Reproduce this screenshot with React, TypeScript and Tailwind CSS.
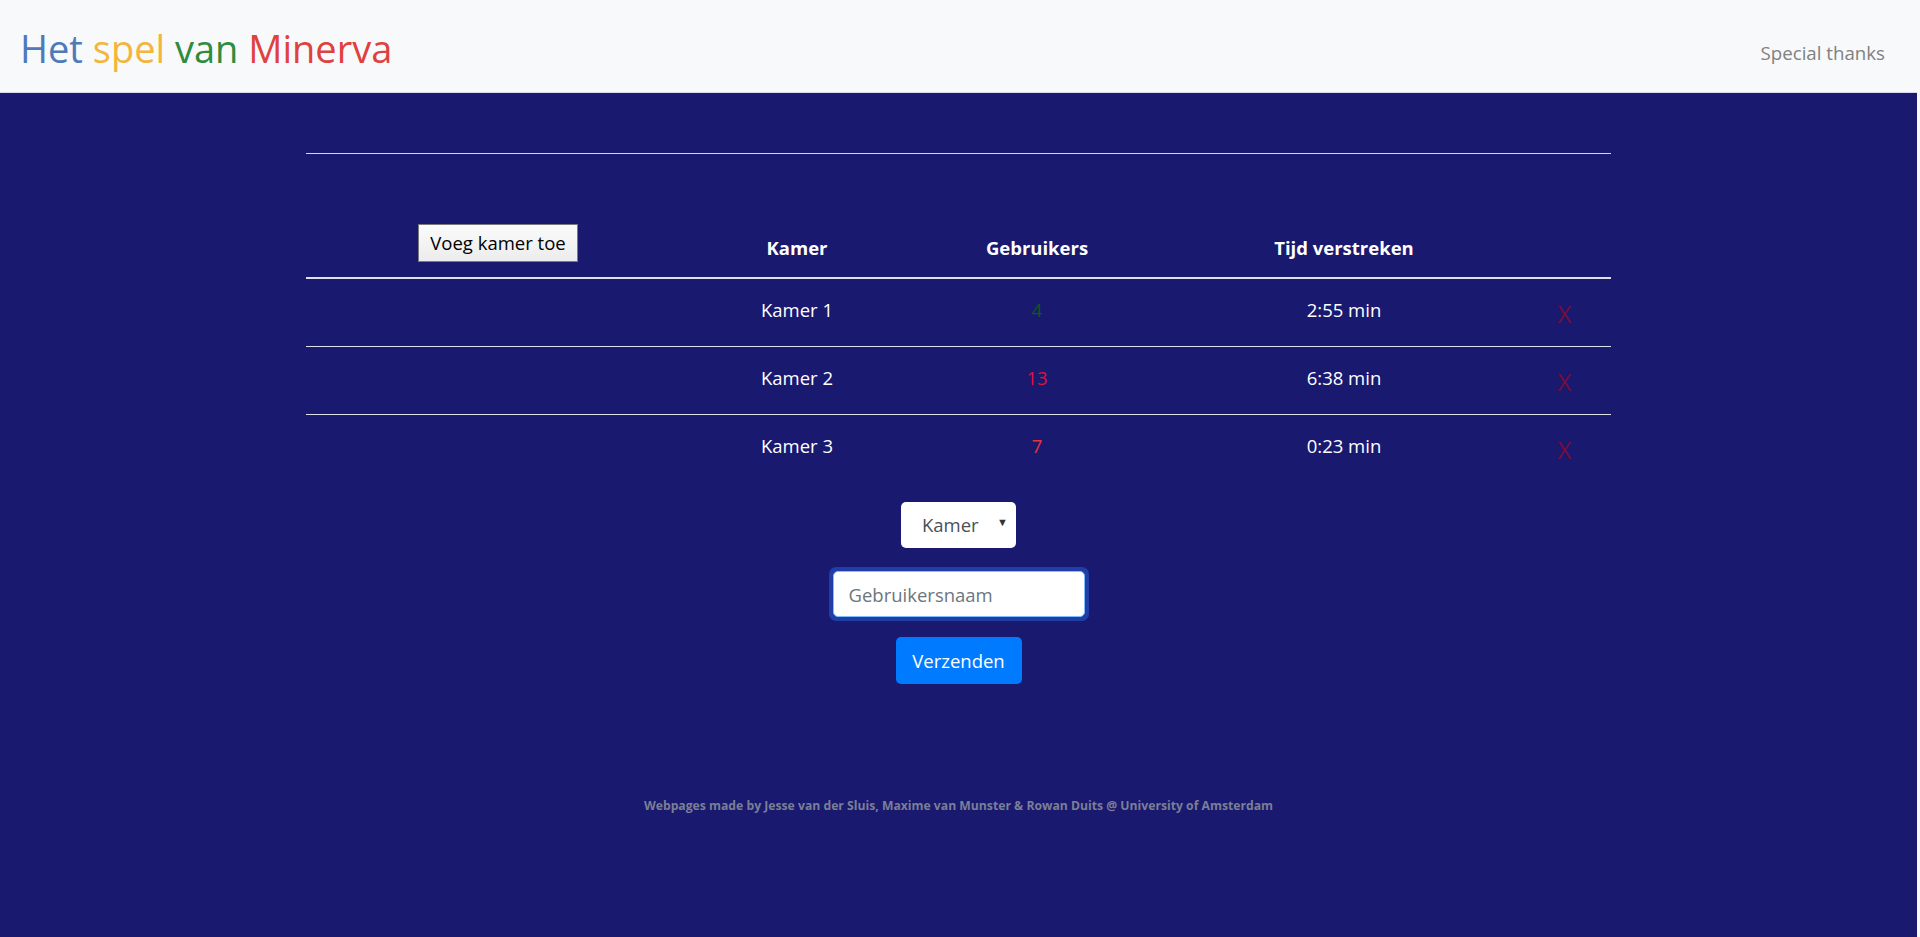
import React from "react";

const font = { fontFamily: '"Open Sans", "Noto Sans", sans-serif' };

const rows = [
  { name: "Kamer 1", users: "4", userColor: "text-[#0b5a1c]", time: "2:55 min" },
  { name: "Kamer 2", users: "13", userColor: "text-[#dc143c]", time: "6:38 min" },
  { name: "Kamer 3", users: "7", userColor: "text-[#e8323c]", time: "0:23 min" },
];

const cols = "grid grid-cols-[384px_214px_266px_348px_93px]";

export default function App() {
  return (
    <div className="flex min-h-[937px] w-full bg-[#f8f9fa]" style={font}>
      <div className="flex w-[1917px] shrink-0 flex-col">
        <header className="flex h-[93px] items-center justify-between border-b border-[#d9d9ef] bg-[#f8f9fa] pl-[20px] pr-[32px]">
          <div className="pt-[4px] text-[38px] leading-[48px]">
            <span className="text-[#4f79b9]">Het</span>{" "}
            <span className="text-[#f3b63c]">spel</span>{" "}
            <span className="text-[#2e8b3f]">van</span>{" "}
            <span className="text-[#e0413f]">Minerva</span>
          </div>
          <a className="pt-[13px] text-[18.7px] leading-[30px] text-[#808182]">Special thanks</a>
        </header>
        <main className="flex flex-1 flex-col items-center bg-[#191970]">
          <div className="mt-[60px] w-[1305px]">
            <div className="h-px bg-[#d6d6e8]" />
            <div className={`${cols} h-[125px] items-end border-b-2 border-[#dee2e6] pb-[14px] text-center text-[18.5px] font-bold leading-[30px] text-white`}>
              <div className="flex justify-center pb-[1px]">
                <button className="h-[38px] w-[160px] border border-[#7a7a7a] bg-gradient-to-b from-[#fbfbfb] to-[#ececec] text-[18.5px] font-normal leading-[30px] text-black">
                  Voeg kamer toe
                </button>
              </div>
              <div>Kamer</div>
              <div>Gebruikers</div>
              <div>Tijd verstreken</div>
              <div />
            </div>
            {rows.map((r, i) => (
              <div
                key={r.name}
                className={`${cols} ${i < 2 ? "h-[68px] border-b border-[#dee2e6]" : "h-[67px]"} items-start pt-[16px] text-center text-[18.5px] leading-[30px] text-white`}
              >
                <div />
                <div>{r.name}</div>
                <div className={r.userColor}>{r.users}</div>
                <div>{r.time}</div>
                <div className="text-[24px] leading-[37px] text-[#760d3a]">X</div>
              </div>
            ))}
          </div>
          <div className="mt-[20px] flex flex-col items-center">
            <div className="relative flex h-[46px] w-[115px] items-center rounded-[5px] bg-white pl-[21px] text-[18.5px] text-[#495057]">
              Kamer
              <span className="absolute right-[8px] top-[12px] text-[11px] text-[#333]">▼</span>
            </div>
            <div className="mt-[19px] rounded-[7px] bg-[#1f3ea6] p-[4px]">
              <input
                className="block h-[46px] w-[252px] rounded-[5px] border border-[#80bdff] bg-white px-[15px] text-[18.5px] text-[#495057] outline-none placeholder:text-[#6c757d]"
                placeholder="Gebruikersnaam"
              />
            </div>
            <button className="mt-[16px] h-[47px] w-[126px] rounded-[5px] bg-[#007bff] text-[18.5px] leading-[30px] text-white">
              Verzenden
            </button>
          </div>
          <div className="mt-[113px] text-[12.2px] font-bold text-[#7b7f95]">
            Webpages made by Jesse van der Sluis, Maxime van Munster &amp; Rowan Duits @ University of Amsterdam
          </div>
        </main>
      </div>
    </div>
  );
}
